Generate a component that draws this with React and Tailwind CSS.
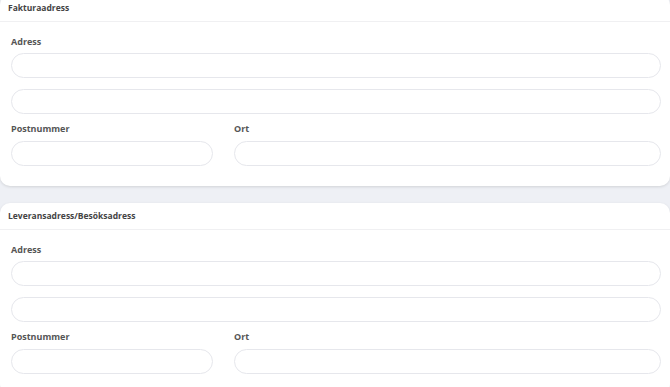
const Field = ({ className = '' }) => {
    return (
        <input
            type="text"
            className={`block h-[25px] w-full rounded-full border border-[#e6e7ec] bg-white px-3 text-[10px] outline-none ${className}`}
        />
    );
};

const Label = ({ children, className = '' }) => {
    return (
        <div className={`text-[9px] font-bold leading-[12px] text-[#555] ${className}`}>
            {children}
        </div>
    );
};

const AddressCard = ({ title, className = '' }) => {
    return (
        <div className={`rounded-[10px] bg-white shadow-[0_1px_3px_rgba(0,0,0,0.12)] ${className}`}>
            <div className="flex h-[27px] items-center border-b border-[#f0f0f2] px-[8px] text-[8.5px] font-bold text-[#444]">
                {title}
            </div>
            <div className="pl-[11px] pr-[9px] pt-[14px] pb-[20px]">
                <Label className="mb-[5px]">Adress</Label>
                <Field />
                <Field className="mt-[11px]" />
                <div className="mt-[9px] grid grid-cols-[202px_1fr] gap-x-[21px]">
                    <div>
                        <Label className="mb-[6px]">Postnummer</Label>
                        <Field className="h-[24px]" />
                    </div>
                    <div>
                        <Label className="mb-[6px]">Ort</Label>
                        <Field className="h-[24px]" />
                    </div>
                </div>
            </div>
        </div>
    );
};

const App = () => {
    return (
        <div
            className="h-[387px] overflow-hidden bg-[#eef0f5]"
            style={{ fontFamily: '"Open Sans", "Liberation Sans", sans-serif' }}
        >
            <AddressCard title="Fakturaadress" className="-mt-[5px]" />
            <AddressCard title="Leveransadress/Besöksadress" className="mt-[17px]" />
        </div>
    );
};

export default App;
